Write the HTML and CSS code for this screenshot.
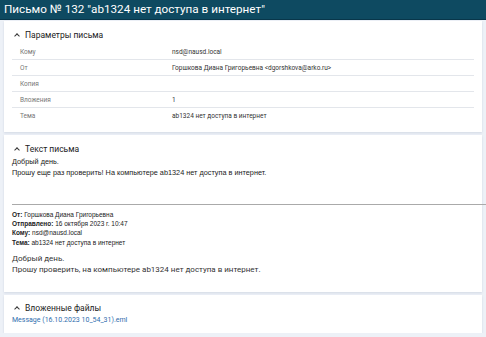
FILE: index.html
```html
<!DOCTYPE html>
<html lang="ru">
<head>
    <meta charset="UTF-8">
    <title>Письмо № 132</title>
    <link rel="stylesheet" href="styles.css">
</head>
<body>
    <div class="topbar">Письмо № 132 "ab1324 нет доступа в интернет"</div>

    <div class="page">
        <div class="card">
            <div class="card-title"><span class="chev"></span>Параметры письма</div>
            <table class="params">
                <colgroup><col class="col-label"><col></colgroup>
                <tr><td class="label">Кому</td><td>nsd@nausd.local</td></tr>
                <tr><td class="label">От</td><td>Горшкова Диана Григорьевна &lt;dgorshkova@arko.ru&gt;</td></tr>
                <tr><td class="label">Копия</td><td></td></tr>
                <tr><td class="label">Вложения</td><td>1</td></tr>
                <tr><td class="label">Тема</td><td>ab1324 нет доступа в интернет</td></tr>
            </table>
        </div>

        <div class="card card-text">
            <div class="card-title"><span class="chev"></span>Текст письма</div>
            <div class="mail">
                <p class="first">Добрый день.<br>Прошу еще раз проверить! На компьютере ab1324 нет доступа в интернет.</p>
                <hr>
                <p class="quote-head">
                    <b>От:</b> Горшкова Диана Григорьевна<br>
                    <b>Отправлено:</b> 16 октября 2023 г. 10:47<br>
                    <b>Кому:</b> nsd@nausd.local<br>
                    <b>Тема:</b> ab1324 нет доступа в интернет
                </p>
                <p class="quote-body">Добрый день.<br>Прошу проверить, на компьютере ab1324 нет доступа в интернет.</p>
            </div>
        </div>

        <div class="card card-files">
            <div class="card-title"><span class="chev"></span>Вложенные файлы</div>
            <a class="file" href="#">Message (16.10.2023 10_54_31).eml</a>
        </div>
    </div>
</body>
</html>
```

FILE: styles.css
```css
body {
    margin: 0;
    font-family: Roboto, 'Liberation Sans', sans-serif;
    background-color: #edf1f7;
    color: #222;
    overflow: hidden;
}
.topbar {
    height: 19px;
    line-height: 19px;
    padding: 0 4px;
    background-color: #0e4a61;
    border-bottom: 1px solid #08364a;
    color: #fff;
    font-size: 11.7px;
    white-space: nowrap;
}
.page {
    padding: 1px 4px 0 4px;
    display: flex;
    flex-direction: column;
    gap: 3px;
}
.card {
    background: #fff;
    box-shadow: 0 1px 2px rgba(60, 80, 120, 0.15);
    padding: 8px;
}
.card-title {
    display: flex;
    align-items: center;
    font-size: 8.5px;
    color: #222;
    height: 12px;
}
.chev {
    display: inline-block;
    width: 3px;
    height: 3px;
    border-left: 1px solid #333;
    border-top: 1px solid #333;
    transform: rotate(45deg);
    margin: 2px 6px 0 3px;
}
.params {
    width: 100%;
    table-layout: fixed;
    border-collapse: collapse;
    font-size: 6.5px;
    margin-top: 3px;
}
.col-label {
    width: 152px;
}
.params td {
    height: 15px;
    padding: 0 0 0 8px;
    border-bottom: 1px solid #e3e6eb;
    color: #333;
    white-space: nowrap;
}
.params tr:last-child td {
    border-bottom: none;
    height: 16px;
}
.params .label {
    color: #777;
}
.mail {
    color: #222;
    padding-top: 1px;
    padding-bottom: 9px;
}
.mail p {
    margin: 0;
}
.first {
    font-family: 'Liberation Sans', Arial, sans-serif;
    font-size: 7.3px;
    line-height: 11px;
}
.mail hr {
    border: none;
    border-top: 1px solid #aaa;
    margin: 26px -12px 5px 0;
}
.quote-head {
    font-family: 'Liberation Sans', Arial, sans-serif;
    font-size: 6.5px;
    line-height: 9.2px;
}
.quote-body {
    margin-top: 6px !important;
    font-size: 8px;
    line-height: 11px;
    color: #333;
}
.file {
    display: block;
    font-size: 7px;
    line-height: 11px;
    color: #2f6eae;
    text-decoration: none;
    margin-top: 1px;
}
.card-files {
    padding-top: 7px;
    padding-bottom: 7px;
}
```
